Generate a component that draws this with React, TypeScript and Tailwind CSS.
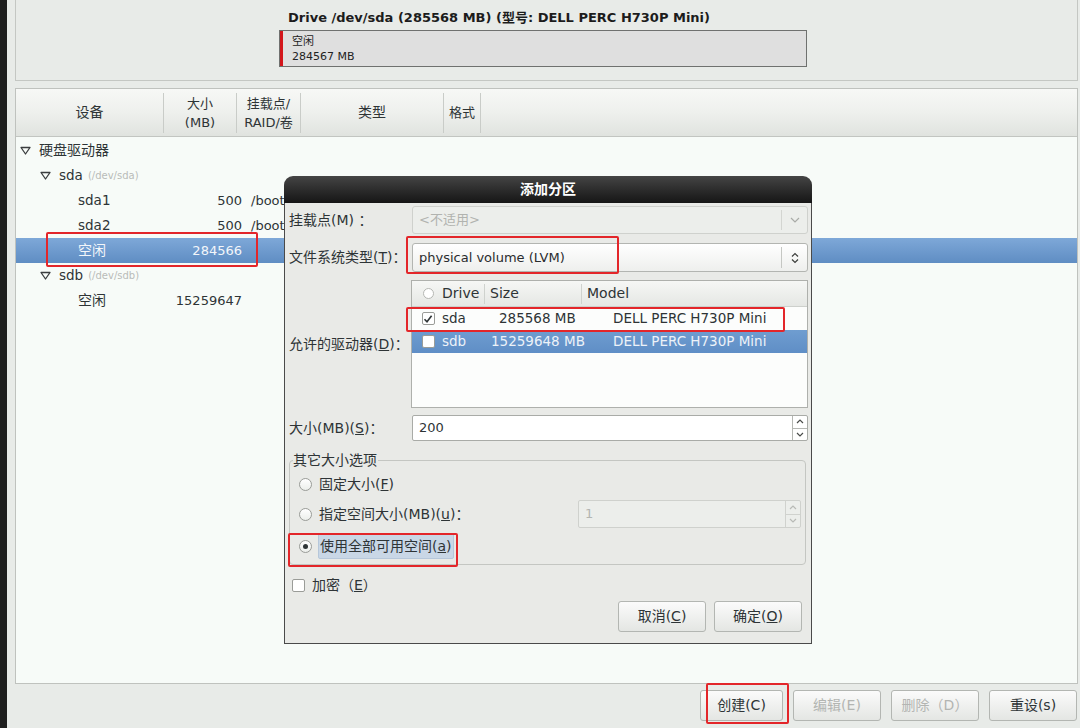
import React from "react";

const Tri = ({ className = "" }: { className?: string }) => (
  <svg width="11" height="9" viewBox="0 0 11 9" className={className}>
    <polygon points="1,1.5 10,1.5 5.5,8" fill="none" stroke="#3a3d3f" strokeWidth="1.3" strokeLinejoin="round" />
  </svg>
);

const Radio = ({ checked = false }: { checked?: boolean }) => (
  <span className="w-[13px] h-[13px] rounded-full border border-[#9a9c98] bg-gradient-to-b from-white to-[#eceeeb] flex items-center justify-center shrink-0">
    {checked && <span className="w-[5px] h-[5px] rounded-full bg-[#2e3436]" />}
  </span>
);

const Check = ({ checked = false }: { checked?: boolean }) => (
  <span className="w-[13px] h-[13px] rounded-[2px] border border-[#9a9c98] bg-white flex items-center justify-center shrink-0">
    {checked && (
      <svg width="10" height="10" viewBox="0 0 10 10">
        <path d="M1.5 5.2 L4 7.8 L8.6 1.8" fill="none" stroke="#2e3436" strokeWidth="1.6" />
      </svg>
    )}
  </span>
);

const RedBox = ({ className }: { className: string }) => (
  <div className={`absolute border-2 border-[#e3262a] rounded-[2px] pointer-events-none ${className}`} />
);

const SpinArrows = ({ disabled = false }: { disabled?: boolean }) => (
  <div className={`w-[15px] h-full flex flex-col border-l ${disabled ? "border-[#d0d2ce]" : "border-[#b5b7b3]"}`}>
    <div className="flex-1 flex items-center justify-center">
      <svg width="8" height="5" viewBox="0 0 8 5">
        <path d="M1 4 L4 1 L7 4" fill="none" stroke={disabled ? "#b8bab6" : "#4a4c4a"} strokeWidth="1.2" />
      </svg>
    </div>
    <div className={`flex-1 flex items-center justify-center border-t ${disabled ? "border-[#d0d2ce]" : "border-[#b5b7b3]"}`}>
      <svg width="8" height="5" viewBox="0 0 8 5">
        <path d="M1 1 L4 4 L7 1" fill="none" stroke={disabled ? "#b8bab6" : "#4a4c4a"} strokeWidth="1.2" />
      </svg>
    </div>
  </div>
);

type Row = { indent: number; tri?: boolean; name: string; cjk?: boolean; sub?: string; size?: string; mount?: string; sel?: boolean };

const rows: Row[] = [
  { indent: 4, tri: true, name: "硬盘驱动器", cjk: true },
  { indent: 24, tri: true, name: "sda", sub: "(/dev/sda)" },
  { indent: 62, name: "sda1", size: "500", mount: "/boot" },
  { indent: 62, name: "sda2", size: "500", mount: "/boot" },
  { indent: 62, name: "空闲", cjk: true, size: "284566", sel: true },
  { indent: 24, tri: true, name: "sdb", sub: "(/dev/sdb)" },
  { indent: 62, name: "空闲", cjk: true, size: "15259647" },
];

const btn = "h-[31px] rounded-[3px] border border-[#b3b6b2] bg-gradient-to-b from-[#fbfbfb] to-[#e4e6e3] flex items-center justify-center text-[14px]";

export default function App() {
  return (
    <div className="relative w-[1080px] h-[728px] flex bg-[#1e1f1e] overflow-hidden font-['DejaVu_Sans','Noto_Sans_CJK_SC',sans-serif] text-[13px] text-[#2e3436]">
      <div className="w-[7px] shrink-0" />
      <div className="flex-1 flex flex-col bg-[#e8ebe8] pl-[8px] pr-[2px]">
        {/* drive overview */}
        <div className="h-[81px] shrink-0 border-x border-b border-[#c4c7c3] bg-[#e8ebe8] pl-[263px] pt-[10px]">
          <div className="pl-[9px] text-[13px] font-bold leading-[16px] text-[#1c1c1c]">
            Drive /dev/sda (285568 MB) (型号: DELL PERC H730P Mini)
          </div>
          <div className="mt-[4px] w-[528px] h-[37px] border border-[#6f716f] bg-[#dfdfdf] flex">
            <div className="w-[3px] bg-[#d3151b]" />
            <div className="pl-[9px] pt-[3px] text-[11px] leading-[15px] text-[#222]">
              <div>空闲</div>
              <div>284567 MB</div>
            </div>
          </div>
        </div>

        {/* partition table */}
        <div className="mt-[7px] h-[596px] shrink-0 border border-[#bfc2be] bg-[#f7fbf8] flex flex-col">
          <div className="h-[48px] shrink-0 flex bg-gradient-to-b from-[#f7f8f6] via-[#eef0ed] to-[#e0e3df] border-b border-[#c2c5c1] text-[#2e3436]">
            {[
              { w: 148, t: ["设备"], z: true },
              { w: 73, t: ["大小", "(MB)"], z: false },
              { w: 64, t: ["挂载点/", "RAID/卷"], z: false },
              { w: 143, t: ["类型"], z: true },
              { w: 37, t: ["格式"], z: false },
            ].map((c, i) => (
              <div key={i} className="flex items-center" style={{ width: c.w }}>
                <div className={`flex-1 flex flex-col items-center justify-center leading-[19px] ${c.z ? "text-[14px]" : ""}`}>
                  {c.t.map((l) => (
                    <span key={l}>{l}</span>
                  ))}
                </div>
                <div className="w-px h-[40px] bg-[#c9ccc8]" />
              </div>
            ))}
          </div>
          <div className="flex flex-col pt-[1px]">
            {rows.map((r, i) => (
              <div
                key={i}
                className={`h-[25px] flex items-center relative ${
                  r.sel ? "bg-gradient-to-b from-[#7ea8d8] to-[#5f8dc3] text-[#f3f6fa]" : ""
                }`}
              >
                <div className="flex items-center" style={{ paddingLeft: r.indent }}>
                  {r.tri && <Tri className="mr-[8px]" />}
                  <span className={r.cjk ? "text-[14px]" : "text-[13.5px]"}>{r.name}</span>
                  {r.sub && <span className="ml-[5px] text-[10px] text-[#b9bcb8]">{r.sub}</span>}
                </div>
                {r.size && (
                  <span className="absolute left-[140px] w-[86px] text-right">{r.size}</span>
                )}
                {r.mount && <span className="absolute left-[235px]">{r.mount}</span>}
              </div>
            ))}
          </div>
        </div>

        {/* buttons */}
        <div className="flex-1 flex items-start justify-end pt-[6px] pr-[1px] gap-[10px]">
          {[
            { t: "创建(C)", w: 83, d: false },
            { t: "编辑(E)", w: 88, d: true },
            { t: "删除（D）", w: 88, d: true },
            { t: "重设(s)", w: 88, d: false },
          ].map((b) => (
            <div
              key={b.t}
              className={`${btn} ${b.d ? "text-[#b3b5b2]" : "text-[#2e3436]"}`}
              style={{ width: b.w }}
            >
              {b.t}
            </div>
          ))}
        </div>
      </div>

      <RedBox className="left-[46px] top-[232px] w-[212px] h-[35px]" />
      <RedBox className="left-[706px] top-[683px] w-[83px] h-[41px]" />

      {/* dialog */}
      <div className="absolute left-[284px] top-[176px] w-[528px] h-[468px] flex flex-col">
        <div className="h-[27px] shrink-0 rounded-t-[9px] bg-gradient-to-b from-[#454545] to-[#161616] flex items-center justify-center text-white font-bold text-[14px]">
          添加分区
        </div>
        <div className="flex-1 bg-[#e9eae7] border-x border-b border-[#4a4a4a] flex flex-col pr-[3px] text-[14px]">
          <div className="flex items-center mt-[3px] h-[28px]">
            <div className="w-[127px] pl-[4px]">挂载点(M) ：</div>
            <div className="flex-1 h-full rounded-[3px] border border-[#cfd1cd] bg-[#eceeeb] flex items-center">
              <span className="flex-1 pl-[6px] text-[#b1b3af] text-[13px]">&lt;不适用&gt;</span>
              <div className="w-[26px] h-[20px] border-l border-[#d3d5d1] flex items-center justify-center">
                <svg width="10" height="6" viewBox="0 0 10 6">
                  <path d="M1 1 L5 5 L9 1" fill="none" stroke="#a9aba7" strokeWidth="1.2" />
                </svg>
              </div>
            </div>
          </div>
          <div className="flex items-center mt-[9px] h-[29px]">
            <div className="w-[127px] pl-[4px]">
              文件系统类型(<u>T</u>)：
            </div>
            <div className="flex-1 h-full rounded-[3px] border border-[#b3b5b1] bg-gradient-to-b from-white to-[#eeefed] flex items-center">
              <span className="flex-1 pl-[6px] text-[#2a2c2e] text-[13px]">physical volume (LVM)</span>
              <div className="w-[26px] h-[21px] border-l border-[#c5c7c3] flex items-center justify-center">
                <svg width="8" height="12" viewBox="0 0 8 12">
                  <path d="M1 4.5 L4 1.5 L7 4.5 M1 7.5 L4 10.5 L7 7.5" fill="none" stroke="#3c3e3c" strokeWidth="1.2" />
                </svg>
              </div>
            </div>
          </div>
          <div className="flex items-center mt-[8px] h-[128px]">
            <div className="w-[126px] pl-[4px]">
              允许的驱动器(<u>D</u>)：
            </div>
            <div className="flex-1 h-full border border-[#aeb0ac] bg-[#fcfdfc] flex flex-col text-[13.5px]">
              <div className="h-[26px] shrink-0 flex items-center bg-gradient-to-b from-[#f6f7f5] to-[#e5e7e4] border-b border-[#cdd0cc] text-[14px]">
                <div className="w-[30px] flex justify-center pl-[2px]">
                  <span className="w-[11px] h-[11px] rounded-full border border-[#b5b7b3] bg-white" />
                </div>
                <span className="w-[42px]">Drive</span>
                <div className="w-px h-[20px] bg-[#cfd2ce]" />
                <span className="w-[96px] pl-[5px]">Size</span>
                <div className="w-px h-[20px] bg-[#cfd2ce]" />
                <span className="pl-[5px]">Model</span>
              </div>
              <div className="h-[23px] flex items-center">
                <div className="w-[30px] flex justify-center pl-[2px]">
                  <Check checked />
                </div>
                <span className="w-[57px]">sda</span>
                <span className="w-[114px]">285568 MB</span>
                <span>DELL PERC H730P Mini</span>
              </div>
              <div className="h-[23px] flex items-center bg-gradient-to-b from-[#6f9dd0] to-[#5f8ec6] text-[#edf2f8]">
                <div className="w-[30px] flex justify-center pl-[2px]">
                  <Check />
                </div>
                <span className="w-[49px]">sdb</span>
                <span className="w-[122px]">15259648 MB</span>
                <span>DELL PERC H730P Mini</span>
              </div>
            </div>
          </div>
          <div className="flex items-center mt-[7px] h-[26px]">
            <div className="w-[127px] pl-[4px]">
              大小(MB)(<u>S</u>)：
            </div>
            <div className="flex-1 h-full rounded-[2px] border border-[#a9aba7] bg-white flex items-center">
              <span className="flex-1 pl-[6px] text-[13px]">200</span>
              <SpinArrows />
            </div>
          </div>

          {/* frame */}
          <div className="relative mt-[19px] ml-[4px] mr-[2px] h-[105px] rounded-[4px] border border-[#c4c6c2] flex flex-col pt-[9px]">
            <span className="absolute -top-[11px] left-[3px] bg-[#e9eae7] pr-[1px] leading-[20px]">其它大小选项</span>
            <div className="h-[28px] flex items-center pl-[9px] gap-[7px]">
              <Radio />
              <span>
                固定大小(<u>F</u>)
              </span>
            </div>
            <div className="h-[32px] flex items-center pl-[9px] gap-[7px]">
              <Radio />
              <span className="flex-1">
                指定空间大小(MB)(<u>u</u>)：
              </span>
              <div className="mr-[4px] w-[223px] h-[28px] rounded-[2px] border border-[#cfd1cd] bg-[#eceeeb] flex items-center">
                <span className="flex-1 pl-[6px] text-[#b3b5b1] text-[13px]">1</span>
                <SpinArrows disabled />
              </div>
            </div>
            <div className="h-[32px] flex items-center pl-[9px] gap-[6px]">
              <Radio checked />
              <span className="h-[26px] px-[1px] flex items-center bg-[#c9d7e6] border border-[#b6c7da] rounded-[2px]">
                使用全部可用空间(<u>a</u>)
              </span>
            </div>
          </div>

          <div className="mt-[10px] h-[20px] flex items-center pl-[7px] gap-[7px]">
            <Check />
            <span>
              加密（<u>E</u>）
            </span>
          </div>

          <div className="mt-[6px] flex justify-end gap-[8px] pr-[6px]">
            <div className={`${btn} w-[88px]`}>
              取消(<u>C</u>)
            </div>
            <div className={`${btn} w-[88px]`}>
              确定(<u>O</u>)
            </div>
          </div>
        </div>
      </div>

      <RedBox className="left-[406px] top-[236px] w-[213px] h-[38px]" />
      <RedBox className="left-[406px] top-[307px] w-[379px] h-[25px]" />
      <RedBox className="left-[288px] top-[533px] w-[170px] h-[34px]" />
    </div>
  );
}
